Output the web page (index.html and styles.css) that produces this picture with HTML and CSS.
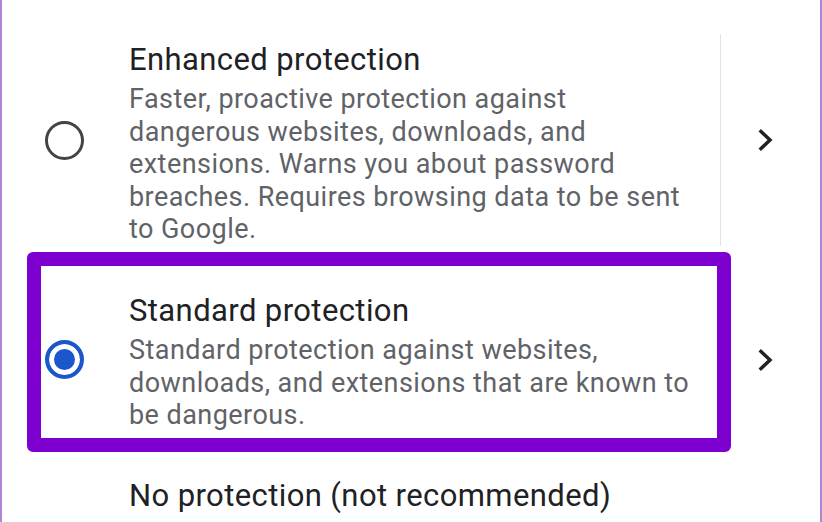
FILE: index.html
```html
<!DOCTYPE html>
<html lang="en">
<head>
    <meta charset="UTF-8">
    <meta name="viewport" content="width=device-width, initial-scale=1.0">
    <title>Safe Browsing</title>
    <link rel="stylesheet" href="styles.css">
</head>
<body>
    <div class="screen">
        <!-- Enhanced -->
        <div class="option option-enhanced">
            <div class="option-main">
                <span class="radio"></span>
                <div class="option-text">
                    <div class="option-title">Enhanced protection</div>
                    <div class="option-desc">Faster, proactive protection against dangerous websites, downloads, and extensions. Warns you about password breaches. Requires browsing data to be sent to Google.</div>
                </div>
            </div>
            <span class="divider"></span>
            <div class="option-action">
                <svg width="16" height="24" viewBox="0 0 16 24"><polyline points="3,3.5 12,12 3,20.5" /></svg>
            </div>
        </div>

        <!-- Standard (selected, highlighted) -->
        <div class="option option-standard">
            <div class="option-main highlight">
                <span class="radio checked"></span>
                <div class="option-text">
                    <div class="option-title">Standard protection</div>
                    <div class="option-desc">Standard protection against websites, downloads, and extensions that are known to be dangerous.</div>
                </div>
            </div>
            <div class="option-action">
                <svg width="16" height="24" viewBox="0 0 16 24"><polyline points="3,3.5 12,12 3,20.5" /></svg>
            </div>
        </div>

        <!-- None: only the title is in view -->
        <div class="option option-none">
            <div class="option-main">
                <div class="option-text">
                    <div class="option-title">No protection (not recommended)</div>
                </div>
            </div>
        </div>
    </div>
</body>
</html>
```

FILE: styles.css
```css
* {
    margin: 0;
    padding: 0;
    box-sizing: border-box;
}

body {
    background-color: #ffffff;
    font-family: Roboto, 'Noto Sans', sans-serif;
}

.screen {
    width: 822px;
    height: 522px;
    overflow: hidden;
    border-left: 2px solid #ad86d6;
    border-right: 2px solid #ad86d6;
    padding-top: 34px;
}

.option {
    display: flex;
    align-items: center;
    padding-left: 39px;
}

.option-enhanced {
    padding-top: 6.4px;
}

.option-standard {
    margin-top: 20px;
    padding-top: 25.5px;
    padding-bottom: 6px;
}

.option-none {
    margin-top: 38.5px;
}

.option-none .option-text {
    margin-left: 88px;
}

.option-main {
    width: 676px;
    display: flex;
    align-items: center;
    position: relative;
}

/* purple annotation box drawn over the selected row */
.highlight::before {
    content: '';
    position: absolute;
    top: -39.5px;
    bottom: -20px;
    left: -14px;
    right: -14px;
    border: 14px solid #7d00d1;
    border-radius: 6px;
    pointer-events: none;
}

.radio {
    flex: none;
    width: 39px;
    height: 39px;
    margin: -6px 45px 0 4px;
    border: 3.5px solid #444444;
    border-radius: 50%;
}

.radio.checked {
    border: 4px solid #1a57cc;
    background-color: #1a57cc;
    box-shadow: inset 0 0 0 5px #ffffff;
    margin-top: -5px;
}

.option-text {
    flex: 1;
    padding-right: 21px;
}

.option-title {
    font-size: 31px;
    line-height: 40px;
    letter-spacing: 0.4px;
    color: #202124;
}

.option-desc {
    margin-top: 3px;
    font-size: 27px;
    line-height: 32.5px;
    letter-spacing: 0.45px;
    color: #5f6368;
}

.divider {
    align-self: stretch;
    width: 1.5px;
    margin: -6px 0 0 3px;
    background-color: #e2e2e2;
}

.option-action {
    width: 90px;
    margin: -6px 9px 0 auto;
    display: flex;
    justify-content: center;
}

.option-standard .option-action {
    margin-top: -4px;
}

.option-action svg polyline {
    fill: none;
    stroke: #202124;
    stroke-width: 3.5;
    stroke-linecap: square;
}
```
